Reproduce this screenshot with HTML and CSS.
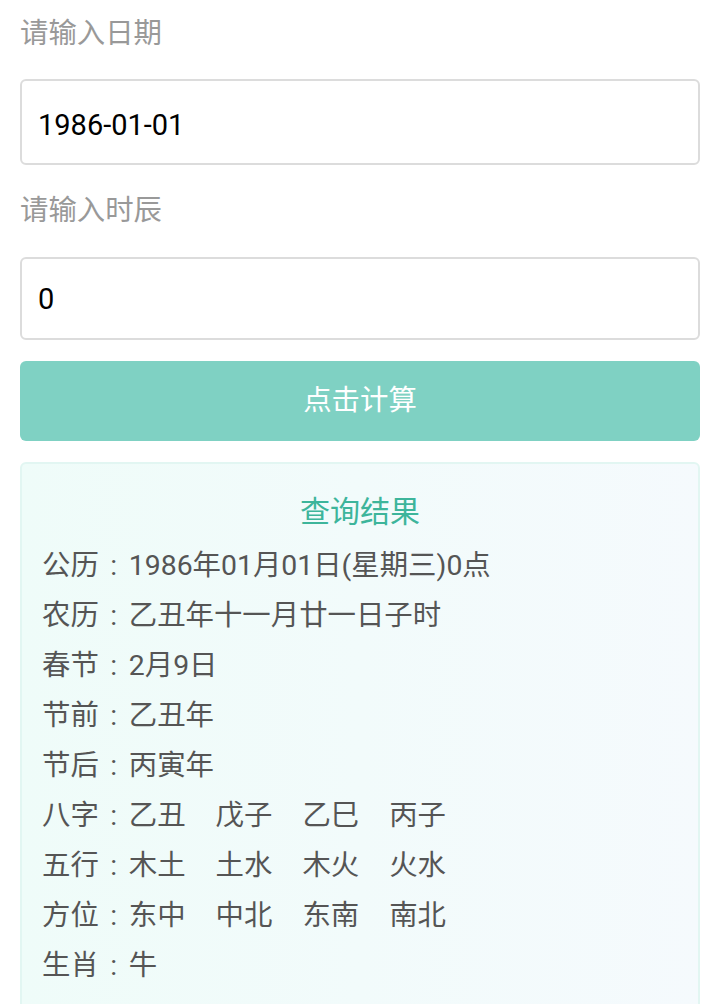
FILE: index.html
```html
<!DOCTYPE html>
<html lang="zh-CN">
<head>
<meta charset="utf-8">
<title>查询</title>
<link rel="stylesheet" href="styles.css">
</head>
<body>
<div class="page">
  <div class="label first">请输入日期</div>
  <div class="field field-date">1986-01-01</div>
  <div class="label">请输入时辰</div>
  <div class="field field-hour">0</div>
  <div class="btn">点击计算</div>
  <div class="result">
    <div class="result-title">查询结果</div>
    <div class="row">公历<span class="colon">:</span>1986年01月01日(星期三)0点</div>
    <div class="row">农历<span class="colon">:</span>乙丑年十一月廿一日子时</div>
    <div class="row">春节<span class="colon">:</span>2月9日</div>
    <div class="row">节前<span class="colon">:</span>乙丑年</div>
    <div class="row">节后<span class="colon">:</span>丙寅年</div>
    <div class="row">八字<span class="colon">:</span><span class="grp">乙丑</span><span class="grp">戊子</span><span class="grp">乙巳</span><span class="grp">丙子</span></div>
    <div class="row">五行<span class="colon">:</span><span class="grp">木土</span><span class="grp">土水</span><span class="grp">木火</span><span class="grp">火水</span></div>
    <div class="row">方位<span class="colon">:</span><span class="grp">东中</span><span class="grp">中北</span><span class="grp">东南</span><span class="grp">南北</span></div>
    <div class="row">生肖<span class="colon">:</span>牛</div>
  </div>
</div>
</body>
</html>
```

FILE: styles.css
```css
html, body {
  margin: 0;
  padding: 0;
  background: #ffffff;
}
body {
  font-family: Roboto, "Noto Sans CJK SC", sans-serif;
  font-size: 28.4px;
  color: #555555;
}
.page {
  padding: 0 20px;
}
.label {
  height: 40px;
  line-height: 40px;
  color: #999999;
  margin: 26px 0 26px;
}
.label.first {
  margin-top: 0;
  padding-top: 14px;
  margin-bottom: 25px;
}
.field {
  box-sizing: border-box;
  border: 2px solid #dcdcdc;
  border-radius: 6px;
  padding: 0 16px;
  display: flex;
  align-items: center;
  color: #000000;
  font-family: Roboto, "Noto Sans", sans-serif;
  font-size: 29px;
}
.field-date {
  height: 86px;
  padding-top: 6px;
}
.field-hour {
  height: 83px;
}
.btn {
  margin-top: 21px;
  height: 80px;
  border-radius: 6px;
  background: #7fd1c3;
  color: #ffffff;
  display: flex;
  align-items: center;
  justify-content: center;
  padding-bottom: 8px;
  box-sizing: border-box;
}
.result {
  margin-top: 21px;
  box-sizing: border-box;
  border: 2px solid #e2f6f2;
  border-radius: 6px;
  background: linear-gradient(90deg, #effcf9 0%, #f5fafd 100%);
  padding: 23px 20px 30px;
  min-height: 560px;
}
.result-title {
  text-align: center;
  font-size: 30px;
  height: 50px;
  line-height: 50px;
  margin-bottom: 4px;
  color: #3db59b;
}
.row {
  height: 50px;
  line-height: 50px;
  white-space: nowrap;
}
.colon {
  display: inline-block;
  width: 30px;
  text-align: center;
}
.grp {
  display: inline-block;
  margin-right: 30px;
}
```
